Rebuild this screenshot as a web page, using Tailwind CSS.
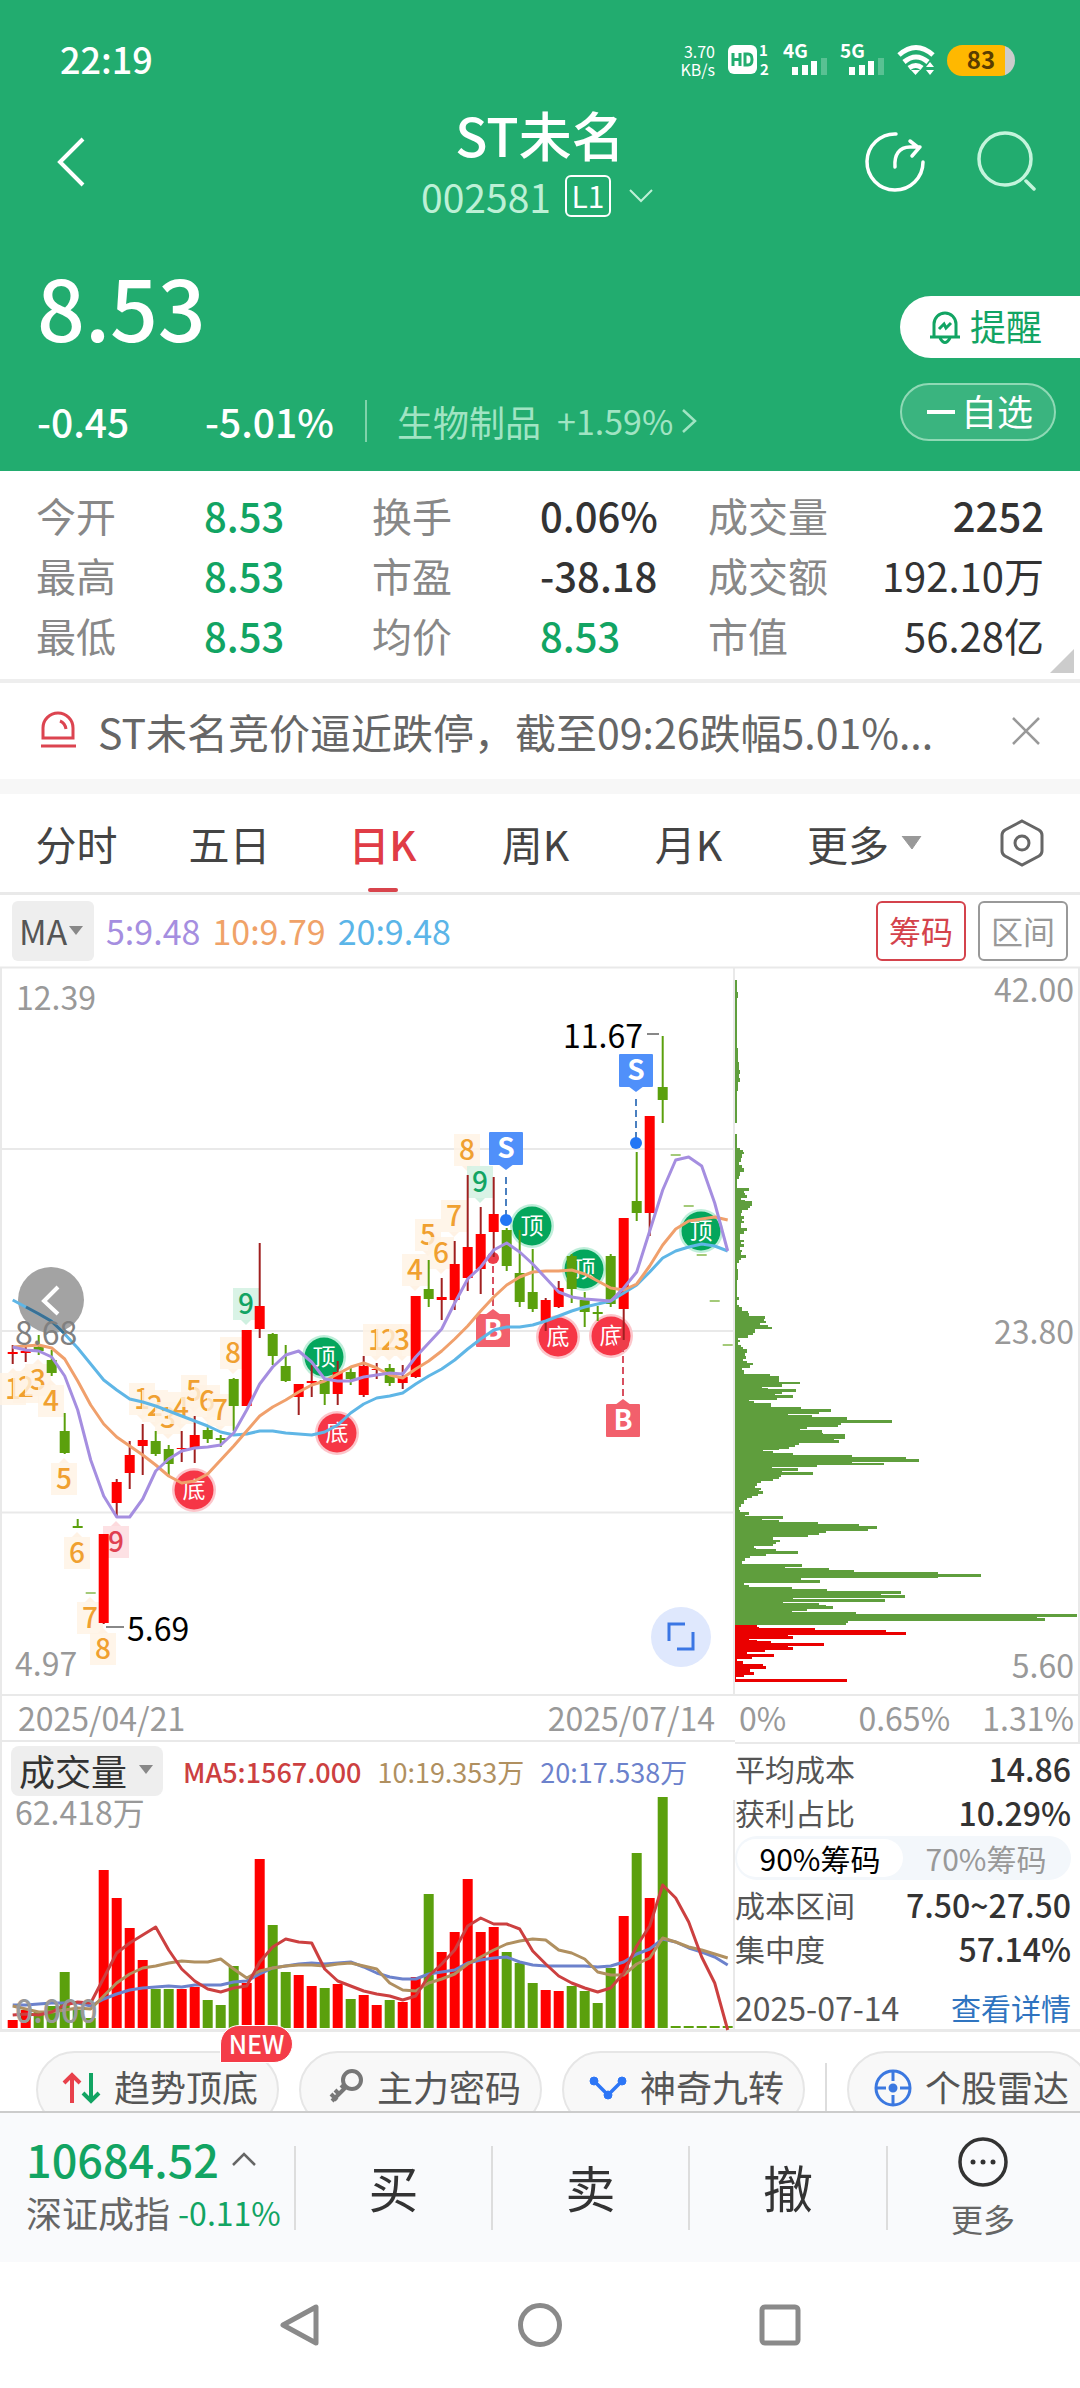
<!DOCTYPE html>
<html lang="zh-CN">
  <head>
    <meta charset="UTF-8" />
    <meta name="viewport" content="width=device-width, initial-scale=1.0" />
    <title>ST未名 002581</title>
    <script src="https://cdn.jsdelivr.net/npm/@tailwindcss/browser@4"></script>
  </head>
  <body class="overflow-x-clip bg-white font-['Noto_Sans_CJK_SC',sans-serif] text-[#333]">
    <!-- Header -->
    <header class="bg-[#22ac6f] pb-5 text-white">
      <!-- Status bar -->
      <div class="flex h-28 items-center justify-between pt-2 pr-[65px] pl-[60px]">
        <span class="pb-1 text-[36px] leading-none font-medium">22:19</span>
        <div class="flex items-center gap-3">
          <div class="text-right text-[16px] leading-[18px]">3.70<br />KB/s</div>
          <svg class="h-10 w-[44px]" viewBox="0 -4 44 40">
            <rect x="1" y="1" width="29" height="29" rx="6" fill="#fff" />
            <path d="M6 9v13M13 9v13M6 15.500h7M18 10v11h3q4 0 4-5.500t-4-5.500z" fill="none" stroke="#22ac6f" stroke-width="3" />
            <text x="32" y="12" font-size="15" font-weight="700" fill="#fff">1</text>
            <text x="33" y="31" font-size="15" font-weight="700" fill="#fff">2</text>
          </svg>
          <svg class="mb-2 h-10 w-[45px]" viewBox="0 -8 45 40">
            <text x="0" y="14" font-size="19" font-weight="700" fill="#fff">4G</text>
            <path d="M12 31v-8M22 31v-10M31 31v-14" stroke="#fff" stroke-width="6" />
            <path d="M41 31v-17" stroke="#fff" stroke-opacity=".25" stroke-width="6" />
          </svg>
          <svg class="mb-2 h-10 w-[45px]" viewBox="0 -8 45 40">
            <text x="0" y="14" font-size="19" font-weight="700" fill="#fff">5G</text>
            <path d="M12 31v-8M22 31v-10M31 31v-14" stroke="#fff" stroke-width="6" />
            <path d="M41 31v-17" stroke="#fff" stroke-opacity=".25" stroke-width="6" />
          </svg>
          <svg class="h-8 w-[38px]" viewBox="0 0 38 32" fill="none" stroke="#fff" stroke-width="5">
            <path d="M2 11q17-15 34 0" />
            <path d="M7 18q12-10 24 0" />
            <path d="M12 24q7-5 13 0" />
            <path d="M14 26h9l-4.500 5z" fill="#fff" stroke="none" />
            <path d="M29 23l4-5 4 5zM29 26l4 5 4-5z" fill="#fff" stroke="none" />
          </svg>
          <div class="flex h-[31px] w-[68px] items-center justify-center rounded-full bg-linear-to-r from-[#ffb800] from-85% to-[#ccc] to-85% pb-0.5 text-[24px] leading-none font-bold text-[#5a3c00]">83</div>
        </div>
      </div>

      <!-- Title bar -->
      <div class="grid grid-cols-[1fr_auto_1fr] items-center">
        <button class="mb-4 justify-self-start pl-[54px]" aria-label="返回">
          <svg class="h-[52px] w-8" viewBox="0 0 32 52" fill="none" stroke="#fff" stroke-width="4"><path d="M29 3L6 26l23 23" /></svg>
        </button>
        <div class="text-center">
          <h1 class="-mt-1 mb-1 text-[53px] leading-[52px] font-medium">ST未名</h1>
          <div class="flex h-16 items-center justify-center gap-3.5 pr-1.5 text-[#bdf0d6]">
            <span class="text-[39px] leading-none">002581</span>
            <span class="flex h-[42px] w-[46px] items-center justify-center rounded-md border-2 border-white pb-0.5 text-[30px] leading-none text-white">L1</span>
            <svg class="ml-1 h-4 w-6" viewBox="0 0 24 16" fill="none" stroke="currentColor" stroke-width="2"><path d="M1 2l11 11L23 2" /></svg>
          </div>
        </div>
        <div class="mb-4 flex items-center gap-[50px] justify-self-end pr-[44px]">
          <button aria-label="分享">
            <svg class="h-[62px] w-[62px]" viewBox="0 0 62 62" fill="none" stroke="#fff" stroke-width="3.500" stroke-linecap="round">
              <path d="M32 3A28 28 0 1 0 59 31" />
              <path d="M31 36c-1-12 4-20 15-20h10M46 10l9 7-7 8" />
            </svg>
          </button>
          <button aria-label="搜索">
            <svg class="h-[62px] w-[60px]" viewBox="0 0 60 62" fill="none" stroke="#c4f4dc" stroke-width="3.500" stroke-linecap="round">
              <circle cx="29" cy="28" r="26" /><path d="M50 50l8 8" />
            </svg>
          </button>
        </div>
      </div>

      <!-- Price -->
      <div class="flex justify-between">
        <div class="pt-[38px] pl-[37px]">
          <div class="text-[84px] leading-[80px] font-medium">8.53</div>
          <div class="mt-[45px] flex h-[60px] items-center text-[39px] leading-none font-medium">
            <span class="w-[168px]">-0.45</span>
            <span class="w-40">-5.01%</span>
            <span class="h-[42px] w-0.5 bg-[#7fd3ab]"></span>
            <a href="#" class="flex items-center gap-2 pl-[30px] text-[36px] font-normal text-[#a0e4c3]">
              <span class="pr-2">生物制品</span>
              <span class="text-[34px]">+1.59%</span>
              <svg class="h-6 w-4" viewBox="0 0 16 24" fill="none" stroke="currentColor" stroke-width="2.500"><path d="M2 1l12 11L2 23" /></svg>
            </a>
          </div>
        </div>
        <div class="w-[180px] pt-[68px] text-[36px] leading-none">
          <button class="flex h-[62px] w-full items-center gap-2 rounded-l-full bg-white pb-1 pl-[28px] text-[#12a463]">
            <svg class="mt-1 h-9 w-[34px]" viewBox="0 0 34 36" fill="none" stroke="currentColor" stroke-width="3">
              <path d="M6 27V15a11 11 0 0 1 22 0v12M2 28h30M12 29q5 9 10 0" />
              <path d="M11 20l5-5 2 4 5-5" />
            </svg>
            提醒
          </button>
          <button class="mt-[25px] flex h-[58px] w-[156px] items-center gap-1.5 rounded-full border-2 border-[#8fd9b5] bg-[#3ab47f] pb-1 pl-[25px]">
            <span class="mt-1 h-1 w-7 bg-white"></span>自选
          </button>
        </div>
      </div>
    </header>

    <!-- Quote figures -->
    <section class="relative border-b-4 border-[#eee] px-9 pt-[14px] pb-[14px]">
      <dl class="grid grid-cols-6 text-[40px] leading-[60px] whitespace-nowrap">
        <dt class="text-[#888]">今开</dt><dd class="font-medium text-[#12a463]">8.53</dd>
        <dt class="text-[#888]">换手</dt><dd class="font-medium">0.06%</dd>
        <dt class="text-[#888]">成交量</dt><dd class="text-right font-medium">2252</dd>
        <dt class="text-[#888]">最高</dt><dd class="font-medium text-[#12a463]">8.53</dd>
        <dt class="text-[#888]">市盈</dt><dd class="font-medium">-38.18</dd>
        <dt class="text-[#888]">成交额</dt><dd class="justify-self-end">192.10万</dd>
        <dt class="text-[#888]">最低</dt><dd class="font-medium text-[#12a463]">8.53</dd>
        <dt class="text-[#888]">均价</dt><dd class="font-medium text-[#12a463]">8.53</dd>
        <dt class="text-[#888]">市值</dt><dd class="justify-self-end">56.28亿</dd>
      </dl>
      <svg class="absolute right-1.5 bottom-1.5 h-6 w-6" viewBox="0 0 24 24"><path d="M24 0v24H0z" fill="#ccc" /></svg>
    </section>

    <!-- Alert -->
    <section class="flex h-[96px] items-center px-10">
      <svg class="mb-1 h-[38px] w-9 shrink-0" viewBox="0 0 36 38" fill="none" stroke="#dc4450" stroke-width="3">
        <path d="M3 28V18a15 15 0 0 1 30 0v10zM1 36h35M20 11q5 2 6 8" />
      </svg>
      <p class="flex-1 truncate pl-[22px] text-[41px] leading-[60px] text-[#666]">ST未名竞价逼近跌停，截至09:26跌幅5.01%...</p>
      <button aria-label="关闭">
        <svg class="h-7 w-7" viewBox="0 0 28 28" stroke="#999" stroke-width="2.500"><path d="M1 1l26 26M27 1L1 27" /></svg>
      </button>
    </section>
    <div class="h-[15px] bg-[#f7f7f7]"></div>

    <!-- Period tabs -->
    <nav class="grid h-[101px] grid-cols-[repeat(6,153fr)_162fr] items-center border-b-3 border-[#e9e9e9] text-center text-[41px] leading-[98px] text-[#444]">
      <button>分时</button>
      <button>五日</button>
      <button class="relative font-medium text-[#e03c46]">日K<span class="absolute bottom-0 left-1/2 h-1 w-[30px] -translate-x-1/2 rounded-full bg-[#d8444c]"></span></button>
      <button>周K</button>
      <button>月K</button>
      <button class="flex items-center justify-end gap-3 whitespace-nowrap">更多<svg class="-mr-1 h-3.5 w-[21px]" viewBox="0 0 21 14"><path d="M1 0h19L11 13z" fill="#999" stroke="#999" stroke-linejoin="round" /></svg></button>
      <button class="justify-self-end pr-9" aria-label="设置">
        <svg class="h-12 w-[44px]" viewBox="0 0 44 48" fill="none" stroke="#666" stroke-width="3"><path d="M22 2l17 9q3 2 3 5v16q0 3-3 5l-17 9-17-9q-3-2-3-5V16q0-3 3-5z" /><circle cx="22" cy="24" r="7" /></svg>
      </button>
    </nav>

    <!-- MA row -->
    <div class="flex h-[71px] items-center px-3 text-[34px] leading-none">
      <button class="flex h-[60px] w-[82px] items-center gap-0.5 rounded-md bg-[#eee] px-[7px] text-[#555]">MA<svg class="h-2.5 w-3.5" viewBox="0 0 14 10"><path d="M0 0h14L7 9z" fill="#888" /></svg></button>
      <span class="pl-3 text-[#a58ee0]">5:9.48</span>
      <span class="pl-3 text-[#f0a268]">10:9.79</span>
      <span class="pl-3 text-[#5bb5e8]">20:9.48</span>
      <button class="ml-auto h-[60px] w-[90px] rounded-md border-2 border-[#d4434c] pb-0.5 text-[32px] text-[#d4434c]">筹码</button>
      <button class="ml-3 h-[60px] w-[90px] rounded-md border-2 border-[#999] pb-0.5 text-[32px] text-[#999]">区间</button>
    </div>

    <!-- Charts -->
    <main class="grid grid-cols-[735fr_345fr]">
      <div class="border-b-3 border-[#e9e9e9]">
        <svg id="kline" class="block w-full" viewBox="0 966 735 728"></svg>
        <div class="flex h-[48px] items-center justify-between border-y-2 border-l-2 border-[#e9e9e9] pr-5 pb-0.5 pl-4 text-[32px] leading-none text-[#999]">
          <span>2025/04/21</span><span>2025/07/14</span>
        </div>
        <div class="flex h-[58px] items-center gap-4 border-l-2 border-[#e9e9e9] pl-[9px] text-[27px] leading-none">
          <button class="mr-1 flex h-[50px] w-[152px] items-center gap-3 rounded-lg bg-[#eee] pb-0.5 pl-2 text-[36px]">成交量<svg class="h-2.5 w-3.5" viewBox="0 0 14 10"><path d="M0 0h14L7 9z" fill="#888" /></svg></button>
          <span class="font-medium text-[#cc4040]">MA5:1567.000</span>
          <span class="text-[#b09060]">10:19.353万</span>
          <span class="text-[#6c82cc]">20:17.538万</span>
        </div>
        <svg id="volume" class="block w-full overflow-visible" viewBox="0 1800 735 229"></svg>
      </div>

      <div class="border-b-3 border-[#e9e9e9]">
        <svg id="chips" class="block w-full" viewBox="735 966 345 728"></svg>
        <div class="flex h-[50px] items-center justify-between border-y-2 border-r-2 border-[#e9e9e9] pr-1 pb-1 pl-1 text-[32px] leading-none text-[#999]">
          <span>0%</span><span class="pl-10">0.65%</span><span>1.31%</span>
        </div>
        <div class="pt-0.5 pr-[9px] text-[32px] leading-[44px]">
          <div class="flex justify-between"><span class="text-[30px] text-[#555]">平均成本</span><span class="font-medium">14.86</span></div>
          <div class="flex justify-between"><span class="text-[30px] text-[#555]">获利占比</span><span class="font-medium">10.29%</span></div>
          <div class="my-0.5 grid h-[44px] grid-cols-2 items-center rounded-full bg-[#f3f7fb] p-0.5 text-[30px] leading-[38px]">
            <button class="rounded-full bg-white text-black">90%筹码</button>
            <button class="text-[#999]">70%筹码</button>
          </div>
          <div class="flex justify-between"><span class="text-[30px] text-[#555]">成本区间</span><span class="font-medium">7.50~27.50</span></div>
          <div class="flex justify-between"><span class="text-[30px] text-[#555]">集中度</span><span class="font-medium">57.14%</span></div>
          <div class="mt-4 flex justify-between leading-[42px] text-[#555]"><span>2025-07-14</span><a href="#" class="text-[30px] text-[#2f74c0]">查看详情</a></div>
        </div>
      </div>
    </main>

    <!-- Tool pills -->
    <div class="flex h-[79px] gap-5 pt-[19px] pl-9 text-[36px] leading-none text-[#555]">
      <button class="relative flex h-[77px] w-[243px] shrink-0 items-center gap-3 rounded-full border-2 border-[#e6e6e6] bg-[#f8f8f8] pb-2 pl-6">
        <svg class="mt-1 h-8 w-10" viewBox="0 0 40 32" fill="none" stroke-width="4"><path d="M10 31V3M2 11l8-8 8 8" stroke="#e8414b" /><path d="M29 1v28M21 21l8 8 8-8" stroke="#12a463" /></svg>
        趋势顶底
        <span class="absolute -top-7 -right-4 flex h-[38px] w-[73px] items-center justify-center rounded-full rounded-bl-none border border-white bg-[#f43c48] pb-0.5 text-[25px] font-medium text-white">NEW</span>
      </button>
      <button class="flex h-[77px] w-[243px] shrink-0 items-center gap-3 rounded-full border-2 border-[#e6e6e6] bg-[#f8f8f8] pb-2 pl-7">
        <svg class="h-9 w-9" viewBox="0 0 36 36" fill="none" stroke="#777" stroke-width="4"><circle cx="23" cy="12" r="9" /><path d="M17 19L3 33M6 22l5 5M12 17l4 4M2 26l6 6" /></svg>
        主力密码
      </button>
      <button class="flex h-[77px] w-[243px] shrink-0 items-center gap-3 rounded-full border-2 border-[#e6e6e6] bg-[#f8f8f8] pb-2 pl-6">
        <svg class="mt-1 h-6 w-10" viewBox="0 0 40 24" fill="#2d76f6" stroke="#2d76f6"><path d="M6 5l14 14L34 5" fill="none" stroke-width="3.500" /><circle cx="6" cy="5" r="4" /><circle cx="20" cy="19" r="4" /><circle cx="34" cy="5" r="4" /></svg>
        神奇九转
      </button>
      <span class="mt-3 h-16 w-0.5 shrink-0 bg-[#ddd]"></span>
      <button class="flex h-[77px] w-[243px] shrink-0 items-center gap-3 rounded-full border-2 border-[#e6e6e6] bg-[#f8f8f8] pb-2 pl-6">
        <svg class="mt-1 h-10 w-10" viewBox="0 0 40 40" fill="none" stroke="#3b78e0" stroke-width="3"><circle cx="20" cy="20" r="17" /><path d="M20 3v10M20 27v10M3 20h10M27 20h10" /><circle cx="20" cy="20" r="3" fill="#3b78e0" /></svg>
        个股雷达
      </button>
    </div>

    <!-- Trade bar -->
    <footer class="relative z-10 grid h-[151px] grid-cols-[294fr_197fr_197fr_198fr_194fr] items-center border-t-2 border-[#ccc] bg-[#f9fafc]">
      <div class="pb-2 pl-[26px] whitespace-nowrap">
        <div class="flex items-center gap-3 text-[45px] leading-[56px] font-medium text-[#12a463]">10684.52<svg class="h-3.5 w-[26px]" viewBox="0 0 26 14" fill="none" stroke="#666" stroke-width="2.500"><path d="M2 13L13 2l11 11" /></svg></div>
        <div class="flex items-center gap-2 text-[36px] leading-[50px] text-[#666]">深证成指<span class="text-[32px] text-[#12a463]">-0.11%</span></div>
      </div>
      <button class="h-[84px] border-l-2 border-[#ddd] pb-1 text-[50px] leading-none">买</button>
      <button class="h-[84px] border-l-2 border-[#ddd] pb-1 text-[50px] leading-none">卖</button>
      <button class="h-[84px] border-l-2 border-[#ddd] pb-1 text-[50px] leading-none">撤</button>
      <button class="relative flex flex-col items-center text-[32px] leading-[44px] text-[#666]">
        <span class="absolute top-1/2 left-0 h-[84px] w-0.5 -translate-y-1/2 bg-[#ddd]"></span>
        <svg class="mb-2 h-[52px] w-[52px]" viewBox="0 0 52 52"><circle cx="26" cy="26" r="23" fill="none" stroke="#333" stroke-width="3.500" /><g fill="#333"><circle cx="16" cy="26" r="2.500" /><circle cx="26" cy="26" r="2.500" /><circle cx="36" cy="26" r="2.500" /></g></svg>
        更多
      </button>
    </footer>

    <!-- System navigation -->
    <div class="flex h-[126px] items-center justify-center gap-[196px] bg-white">
      <button aria-label="后退"><svg class="h-11 w-11" viewBox="0 0 44 44" fill="none" stroke="#8a8a8a" stroke-width="5" stroke-linejoin="round"><path d="M38 4v36L5 22z" /></svg></button>
      <button aria-label="主屏"><svg class="h-11 w-11" viewBox="0 0 44 44" fill="none" stroke="#8a8a8a" stroke-width="5"><circle cx="22" cy="22" r="19.500" /></svg></button>
      <button aria-label="任务"><svg class="h-11 w-11" viewBox="0 0 44 44" fill="none" stroke="#8a8a8a" stroke-width="5"><rect x="4" y="4" width="36" height="36" rx="3" /></svg></button>
    </div>

    <script>
      const RED = "#fe0000";
      const GREEN = "#5ba00d";
      const X0 = 12.7;
      const STEP = 13;
      const cx = (i) => X0 + STEP * i;

      // color, high, body top, body bottom, low, volume top
      const candles = [
        ["r", 1345, 1352, 1354, 1364, 2020], ["r", 1345, 1351, 1353, 1362, 2010], ["g", 1335, 1347, 1351, 1355, 2012],
        ["g", 1350, 1360, 1373, 1376, 2006], ["g", 1413, 1431, 1453, 1454, 1972], ["g", 1519, 1526, 1528, 1528, 2010],
        ["d", 1593, 1592, 1594, 1593, 2018], ["r", 1534, 1534, 1623, 1624, 1870], ["r", 1479, 1482, 1503, 1516, 1898],
        ["r", 1441, 1455, 1473, 1489, 1928], ["r", 1424, 1440, 1446, 1475, 1960], ["g", 1431, 1441, 1454, 1456, 1989],
        ["g", 1445, 1449, 1464, 1475, 1989], ["r", 1431, 1448, 1449, 1462, 1989], ["r", 1416, 1435, 1448, 1463, 1987],
        ["g", 1427, 1430, 1439, 1443, 2000], ["g", 1435, 1438, 1440, 1447, 2005], ["g", 1378, 1379, 1406, 1431, 1966],
        ["r", 1330, 1330, 1406, 1406, 1983], ["r", 1243, 1306, 1329, 1338, 1859], ["g", 1333, 1334, 1356, 1365, 1925],
        ["g", 1345, 1366, 1381, 1382, 1972], ["r", 1384, 1384, 1397, 1415, 1975], ["r", 1365, 1381, 1383, 1397, 1986],
        ["g", 1378, 1380, 1394, 1405, 1988], ["r", 1361, 1372, 1394, 1405, 1984], ["g", 1366, 1372, 1379, 1385, 1999],
        ["r", 1356, 1366, 1395, 1397, 1995], ["r", 1363, 1369, 1370, 1379, 2005], ["g", 1364, 1368, 1383, 1386, 2000],
        ["r", 1365, 1377, 1383, 1389, 2002], ["r", 1296, 1296, 1377, 1378, 1977], ["g", 1260, 1289, 1299, 1307, 1894],
        ["r", 1278, 1297, 1300, 1320, 1952], ["r", 1241, 1264, 1300, 1310, 1932], ["r", 1175, 1247, 1278, 1291, 1879],
        ["r", 1207, 1234, 1269, 1294, 1932], ["r", 1177, 1214, 1232, 1257, 1927], ["g", 1228, 1230, 1266, 1271, 1952],
        ["g", 1230, 1273, 1302, 1307, 1963], ["g", 1249, 1292, 1309, 1312, 1983], ["r", 1298, 1300, 1321, 1331, 1990],
        ["r", 1281, 1288, 1307, 1308, 1991], ["g", 1254, 1256, 1289, 1303, 1986], ["g", 1292, 1300, 1312, 1327, 1991],
        ["g", 1306, 1312, 1314, 1321, 2003], ["g", 1254, 1256, 1304, 1307, 1968], ["r", 1218, 1218, 1309, 1340, 1916],
        ["g", 1152, 1201, 1213, 1221, 1853], ["r", 1116, 1116, 1213, 1236, 1898], ["g", 1036, 1087, 1100, 1123, 1797],
        ["d", 1154, 1154, 1156, 1154, 2026], ["d", 1206, 1205, 1207, 1206, 2026], ["d", 1255, 1254, 1256, 1255, 2026],
        ["d", 1301, 1300, 1302, 1301, 2026], ["d", 1345, 1344, 1346, 1345, 2026],
      ];

      const ma5 = [1347, 1350, 1351, 1357, 1376, 1410, 1460, 1496, 1517, 1517, 1499, 1471, 1459, 1451, 1448, 1447, 1445, 1433, 1410, 1384, 1367, 1355, 1351, 1362, 1379, 1381, 1381, 1377, 1375, 1373, 1374, 1357, 1343, 1329, 1303, 1279, 1267, 1250, 1243, 1252, 1264, 1278, 1292, 1297, 1299, 1300, 1301, 1288, 1272, 1231, 1190, 1160, 1157, 1166, 1203, 1251];
      const ma10 = [1347, 1346, 1345, 1348, 1359, 1381, 1405, 1424, 1437, 1446, 1455, 1465, 1476, 1483, 1481, 1474, 1460, 1446, 1431, 1416, 1407, 1400, 1392, 1385, 1381, 1374, 1367, 1363, 1368, 1375, 1378, 1369, 1361, 1351, 1339, 1326, 1311, 1297, 1285, 1277, 1272, 1271, 1271, 1270, 1274, 1281, 1288, 1290, 1284, 1266, 1245, 1229, 1221, 1219, 1217, 1220];
      const ma20 = [1300, 1307, 1314, 1321, 1334, 1348, 1364, 1380, 1390, 1399, 1402, 1406, 1411, 1416, 1421, 1426, 1432, 1435, 1434, 1431, 1431, 1433, 1434, 1435, 1432, 1425, 1413, 1404, 1398, 1396, 1393, 1384, 1376, 1369, 1360, 1349, 1339, 1330, 1327, 1327, 1325, 1321, 1316, 1311, 1307, 1304, 1301, 1293, 1285, 1272, 1258, 1251, 1247, 1244, 1246, 1251];
      const vol5 = [2015, 2014, 2015, 2012, 2005, 2002, 2003, 1978, 1953, 1943, 1935, 1927, 1950, 1969, 1981, 1989, 1992, 1988, 1986, 1962, 1947, 1939, 1942, 1943, 1969, 1981, 1986, 1991, 1994, 1996, 2000, 1996, 1976, 1964, 1950, 1926, 1918, 1924, 1924, 1929, 1951, 1964, 1976, 1983, 1988, 1992, 1988, 1973, 1946, 1926, 1885, 1898, 1922, 1957, 1983, 2030];
      const vol10 = [2006, 2009, 2012, 2012, 2010, 2008, 2009, 1996, 1983, 1974, 1968, 1966, 1963, 1961, 1962, 1962, 1959, 1969, 1978, 1971, 1968, 1966, 1965, 1965, 1966, 1964, 1963, 1966, 1969, 1983, 1990, 1991, 1983, 1979, 1974, 1964, 1957, 1950, 1944, 1941, 1939, 1940, 1950, 1953, 1959, 1972, 1975, 1975, 1964, 1958, 1938, 1942, 1947, 1950, 1954, 1958];
      const vol20 = [2005, 2005, 2004, 2003, 2003, 2003, 2006, 1999, 1994, 1990, 1988, 1987, 1986, 1987, 1985, 1985, 1985, 1982, 1981, 1974, 1968, 1966, 1964, 1963, 1964, 1963, 1962, 1967, 1973, 1977, 1979, 1979, 1974, 1972, 1970, 1963, 1960, 1958, 1957, 1962, 1965, 1966, 1966, 1966, 1966, 1967, 1966, 1962, 1954, 1949, 1939, 1942, 1948, 1952, 1957, 1965];

      const line = (ys, color) =>
        `<polyline points="${ys.map((y, i) => cx(i) + "," + y).join(" ")}" fill="none" stroke="${color}" stroke-width="3" stroke-linejoin="round"/>`;
      const label = (x, y, s, size, color, extra = "") =>
        `<text x="${x}" y="${y}" font-size="${size}" fill="${color}" ${extra}>${s}</text>`;

      // Nine-turn numbers: x, centre y, digit, style, pointer direction
      const turns = [
        [13, 1389, 1, "o", -1], [26, 1387, 2, "o", -1], [38, 1380, 3, "o", -1], [51, 1401, 4, "o", -1], [64, 1479, 5, "o", -1],
        [77, 1553, 6, "o", -1], [90, 1618, 7, "o", -1], [103, 1649, 8, "o", -1], [116, 1542, 9, "r", -1],
        [142, 1399, 1, "o", 1], [155, 1406, 2, "o", 1], [168, 1418, 3, "o", 1], [181, 1408, 4, "o", 1], [194, 1391, 5, "o", 1],
        [207, 1401, 6, "o", 1], [220, 1410, 7, "o", 1], [233, 1353, 8, "o", 1], [246, 1304, 9, "g", 1],
        [376, 1340, 1, "o", 1], [389, 1340, 2, "o", 1], [402, 1340, 3, "o", 1], [415, 1270, 4, "o", 1], [428, 1235, 5, "o", 1],
        [441, 1253, 6, "o", 1], [454, 1216, 7, "o", 1], [467, 1150, 8, "o", 1], [480, 1182, 9, "g", 1],
      ];
      const turnColors = { o: ["#f0a030", "#fff2e4"], r: ["#e04050", "#fddadd"], g: ["#12a463", "#cff0e0"] };
      const turn = ([x, y, n, c, dir]) => {
        const [fg, bg] = turnColors[c];
        const edge = y + dir * 16;
        return `<g><rect x="${x - 13}" y="${y - 16}" width="26" height="32" fill="${bg}" fill-opacity=".8"/>
          <path d="M${x - 5} ${edge}h10l-5 ${dir * 5}z" fill="${bg}"/>
          ${label(x, y + 10, n, 28, fg, 'text-anchor="middle" font-weight="500"')}</g>`;
      };

      // Buy / sell flags: letter, x, box top, dot y
      const flags = [["S", 506, 1132, 1220], ["S", 636, 1054, 1143], ["B", 493, 1314, 1258], ["B", 623, 1404, 1344]];
      const flag = ([s, x, top, dot]) => {
        const sell = s === "S";
        const fill = sell ? "#5090fa" : "#f2606c";
        const dark = sell ? "#2276f5" : "#ee3d4a";
        const tip = sell ? `M${x - 8} ${top + 32}h16l-8 6z` : `M${x - 8} ${top + 1}h16l-8 -6z`;
        const from = sell ? top + 45 : top - 8;
        return `<path d="M${x} ${from}V${dot}" stroke="${sell ? "#4a80c0" : "#d85060"}" stroke-width="2" stroke-dasharray="7 4"/>
          <circle cx="${x}" cy="${dot}" r="6" fill="${dark}"/>
          <rect x="${x - 17}" y="${top}" width="34" height="33" rx="1" fill="${fill}"/><path d="${tip}" fill="${fill}"/>
          ${label(x, top + 26, s, 28, "#fff", 'text-anchor="middle" font-weight="700"')}`;
      };

      const spots = [
        ["顶", 324, 1357], ["顶", 532, 1226], ["顶", 584, 1269], ["顶", 701, 1231],
        ["底", 194, 1490], ["底", 337, 1433], ["底", 558, 1337], ["底", 611, 1336],
      ];
      const spot = ([s, x, y]) => {
        const top = s === "顶";
        return `<circle cx="${x}" cy="${y}" r="22" fill="${top ? "#bfeeda" : "#fcc5ca"}"/>
          <circle cx="${x}" cy="${y}" r="19.500" fill="${top ? "#04a65c" : "#f63646"}"/>
          ${label(x, y + 8, s, 23, "#fff", 'text-anchor="middle"')}`;
      };

      const candle = ([c, high, top, bottom, low], i) => {
        const fill = c === "r" ? RED : GREEN;
        const wick = c === "r" ? "#a02020" : GREEN;
        return `<g ${c === "d" ? 'opacity=".55"' : ""}><path d="M${cx(i)} ${high}V${low}" stroke="${wick}" stroke-width="2"/>
          <rect x="${cx(i) - 5}" y="${top}" width="10" height="${bottom - top}" fill="${fill}"/></g>`;
      };

      document.getElementById("kline").innerHTML = `
        <path d="M0 967.500H735M0 1149H735M0 1331H735M0 1512.500H735" stroke="#e9e9e9" stroke-width="2"/>
        <path d="M1 967V1694M734 967V1694" stroke="#e9e9e9" stroke-width="2"/>
        ${turns.map(turn).join("")}
        ${spots.map(spot).join("")}
        ${flags.map(flag).join("")}
        ${candles.map(candle).join("")}
        <circle cx="51" cy="1300" r="33" fill="#a3a3a3"/>
        <path d="M58 1287l-14 14 14 13" fill="none" stroke="#fff" stroke-width="4"/>
        ${line(ma20, "#5fb6e6")}${line(ma10, "#f0a06c")}${line(ma5, "#a58ee0")}
        <path d="M26 1307l13 7 12 7 13 12" fill="none" stroke="#3a7094" stroke-width="3"/>
        ${label(16, 1010, "12.39", 32, "#999")}
        ${label(15, 1345, "8.68", 32, "#808080")}
        ${label(15, 1676, "4.97", 32, "#999")}
        <path d="M647 1034h12M106 1627h18" stroke="#888" stroke-width="2"/>
        ${label(643, 1048, "11.67", 32, "#000", 'text-anchor="end"')}
        ${label(127, 1641, "5.69", 32, "#000")}
        <circle cx="681" cy="1637" r="30" fill="#dfe8fd"/>
        <path d="M669 1641v-17h16M693 1632v17h-16" fill="none" stroke="#3b76e4" stroke-width="3"/>`;

      document.getElementById("volume").innerHTML = `
        <path d="M1 1800V2029M734 1800V2029" stroke="#e9e9e9" stroke-width="2"/>
        ${candles.map((c, i) => `<rect x="${cx(i) - 5}" y="${c[5]}" width="10" height="${2028 - c[5]}" fill="${c[0] === "r" ? RED : GREEN}"/>`).join("")}
        ${line(vol20, "#6c82cc")}${line(vol10, "#b09060")}${line(vol5, "#cc4040")}
        ${label(15, 1825, "62.418万", 32, "#999")}
        ${label(15, 2023, "0.000", 32, "#999", 'font-weight="500"')}`;

      // Chip distribution: start y, width; each step runs to the next start
      const chips = [
        [980, 2], [992, 3], [998, 2], [1048, 3], [1062, 4], [1070, 5], [1074, 4], [1078, 5], [1082, 3], [1091, 2], [1123, 0], [1134, 2],
        [1148, 5], [1150, 8], [1152, 9], [1154, 7], [1158, 6], [1162, 4], [1165, 7], [1168, 9], [1172, 5], [1176, 4], [1179, 2],
        [1188, 14], [1191, 9], [1193, 10], [1195, 12], [1198, 6], [1200, 10], [1201, 17], [1206, 15], [1208, 13], [1210, 7], [1213, 6],
        [1216, 9], [1219, 7], [1221, 9], [1223, 6], [1228, 12], [1231, 9], [1234, 5], [1240, 9], [1242, 6], [1244, 9], [1247, 5],
        [1250, 7], [1252, 6], [1255, 11], [1258, 6], [1260, 4], [1263, 2], [1269, 3], [1280, 2], [1297, 4], [1300, 2], [1305, 4],
        [1307, 7], [1311, 13], [1313, 14], [1316, 30], [1319, 29], [1321, 31], [1323, 25], [1325, 33], [1327, 37], [1329, 20],
        [1333, 18], [1335, 13], [1338, 3], [1340, 5], [1342, 3], [1345, 6], [1347, 8], [1349, 12], [1353, 10], [1356, 11], [1359, 8],
        [1361, 12], [1363, 18], [1365, 15], [1368, 7], [1370, 9], [1374, 35], [1376, 44], [1382, 65], [1384, 47], [1387, 27],
        [1388, 33], [1389, 61], [1392, 47], [1394, 40], [1395, 58], [1398, 42], [1400, 14], [1401, 19], [1403, 36], [1407, 66],
        [1409, 96], [1412, 84], [1414, 53], [1415, 77], [1417, 112], [1420, 157], [1423, 106], [1425, 103], [1427, 72], [1429, 65],
        [1430, 87], [1433, 88], [1434, 110], [1439, 99], [1440, 104], [1443, 64], [1445, 60], [1447, 54], [1449, 44], [1450, 28],
        [1451, 38], [1453, 58], [1455, 117], [1457, 171], [1459, 184], [1462, 117], [1463, 149], [1465, 82], [1467, 37], [1468, 63],
        [1471, 47], [1472, 78], [1475, 46], [1477, 44], [1479, 38], [1481, 26], [1483, 22], [1486, 20], [1488, 26], [1490, 24],
        [1491, 28], [1494, 23], [1496, 17], [1498, 12], [1500, 9], [1504, 6], [1507, 4], [1510, 5], [1512, 14], [1515, 10],
        [1516, 48], [1519, 27], [1520, 44], [1522, 83], [1524, 124], [1526, 142], [1529, 133], [1531, 91], [1533, 84], [1535, 73],
        [1537, 38], [1540, 45], [1542, 41], [1544, 38], [1546, 19], [1548, 21], [1549, 41], [1551, 63], [1554, 31], [1556, 15],
        [1558, 10], [1561, 7], [1564, 67], [1567, 50], [1568, 94], [1570, 119], [1572, 203], [1574, 246], [1577, 203], [1578, 66],
        [1580, 85], [1583, 9], [1585, 14], [1587, 57], [1589, 92], [1591, 166], [1594, 146], [1595, 170], [1598, 58], [1599, 150],
        [1602, 48], [1603, 84], [1605, 91], [1606, 98], [1609, 72], [1611, 57], [1612, 121], [1614, 342], [1617, 302], [1618, 310],
        [1621, 113], [1623, 111], [1625, 22], [1627, 24], [1628, 80], [1630, 151], [1632, 171], [1635, 53], [1636, 58], [1639, 14],
        [1640, 22], [1641, 36], [1643, 89], [1646, 53], [1647, 58], [1650, 30], [1652, 12], [1654, 39], [1657, 17], [1659, 2],
        [1661, 8], [1664, 28], [1666, 31], [1669, 15], [1672, 19], [1675, 9], [1677, 1], [1679, 112], [1682, 0],
      ];
      document.getElementById("chips").innerHTML = `
        <path d="M735 967.500H1080M1079 967V1694" stroke="#e9e9e9" stroke-width="2"/>
        ${chips.slice(0, -1).map(([y, w], i) => `<rect x="735" y="${y}" width="${w}" height="${chips[i + 1][0] - y}" fill="${y < 1625 ? "#5f9e3d" : "#ea0000"}"/>`).join("")}
        ${label(1074, 1002, "42.00", 32, "#999", 'text-anchor="end"')}
        ${label(1074, 1344, "23.80", 32, "#999", 'text-anchor="end"')}
        ${label(1074, 1678, "5.60", 32, "#999", 'text-anchor="end"')}`;
    </script>
  </body>
</html>
